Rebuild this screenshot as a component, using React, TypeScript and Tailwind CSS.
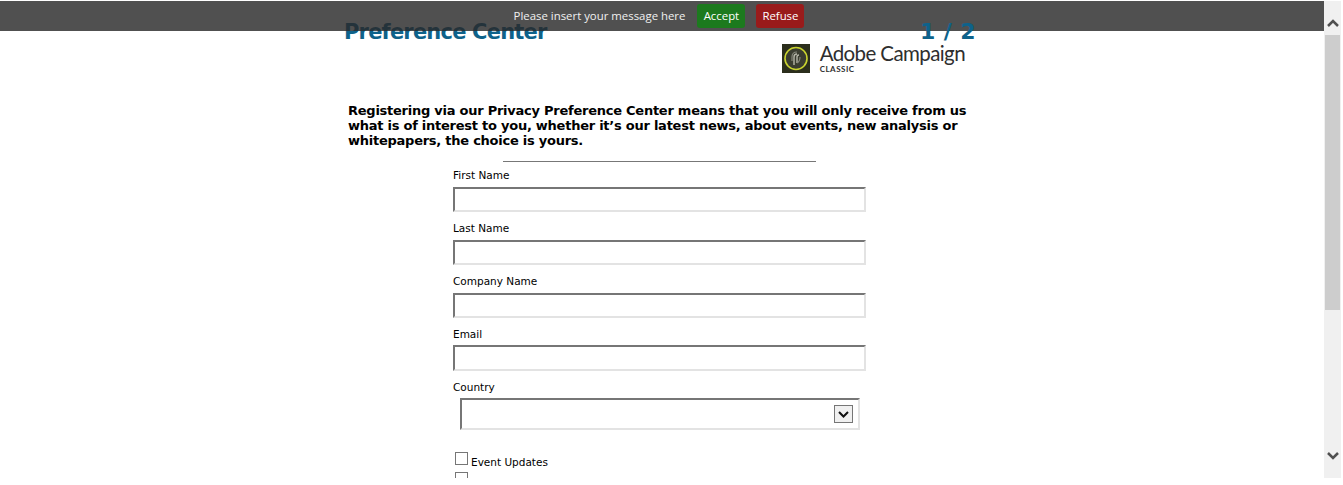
const fields = ["First Name", "Last Name", "Company Name", "Email"];

const insetBorder =
  "border-2 border-t-[#767676] border-l-[#767676] border-r-[#e3e3e3] border-b-[#e3e3e3] bg-white";

const Logo = () => (
  <div className="flex items-start">
    <svg width="28" height="29" viewBox="0 0 28 29" className="mt-[1px]">
      <rect width="28" height="29" fill="#2b2e1c" />
      <circle cx="14" cy="14.500" r="11" fill="#3a3c30" stroke="#c9d32f" strokeWidth="1.6" />
      <path d="M12 21V13c0-2 1-3 3-3M15 19v-6c0-1 .5-2 2-2" fill="none" stroke="#b5b5a8" strokeWidth="1.4" />
      <path d="M10 17v-4c0-3 2-5 5-5M18 13c0 3-1 5-3 6" fill="none" stroke="#85867a" strokeWidth="1.2" />
    </svg>
    <div className="ml-[10px] flex flex-col font-['Lato',sans-serif] text-[#2e2e2e]">
      <span className="-mt-[2px] text-[20.5px] leading-[24px] tracking-[-0.6px]">Adobe Campaign</span>
      <span className="text-[8px] font-bold leading-[8px] tracking-[0.5px]">CLASSIC</span>
    </div>
  </div>
);

export default function App() {
  return (
    <div className="flex h-[485px] w-[1343px] overflow-hidden bg-white pt-px font-['DejaVu_Sans',sans-serif]">
      <div className="relative h-[477px] w-[1324px] overflow-hidden">
        <div className="absolute inset-x-0 top-0 z-10 flex h-[30px] items-center justify-center bg-[#2a2a2a]/[0.82] pb-[1px] font-['Open_Sans',sans-serif] text-[11.4px] text-[#f0f0f0]">
          <span className="ml-[-6px]">Please insert your message here</span>
          <span className="ml-[12px] flex h-[24px] w-[48px] items-center justify-center rounded-[3px] bg-[#1c7a1e] text-white">Accept</span>
          <span className="ml-[11px] flex h-[24px] w-[48px] items-center justify-center rounded-[3px] bg-[#991b1b] text-white">Refuse</span>
        </div>

        <div className="mx-auto w-[636px] pt-[20px]">
          <div className="flex items-baseline justify-between pr-[4px] font-bold leading-[21px] text-[#0e628a]">
            <span className="text-[21px] tracking-[-0.8px]">Preference Center</span>
            <span className="relative z-20 text-[22px] tracking-[0.4px]">1 / 2</span>
          </div>
          <div className="flex justify-end pr-[15px]">
            <Logo />
          </div>
          <p className="pl-[4px] pr-[7px] pt-[30px] text-[13px] font-bold leading-[15px] tracking-[-0.25px] text-black">
            Registering via our Privacy Preference Center means that you will only receive from us what is of interest to you, whether it’s our latest news, about events, new analysis or whitepapers, the choice is yours.
          </p>
          <hr className="ml-[159px] mt-[13px] w-[313px] border-t border-[#777]" />
          <div className="flex flex-col pl-[109px] pt-[7px] text-[10.5px] leading-[13px] text-black">
            {fields.map((f) => (
              <div key={f} className="mb-[10px] flex flex-col">
                <label className={f === "Email" ? "mb-[4px] h-[13px]" : "mb-[5px] h-[13px]"}>{f}</label>
                <input className={`w-[413px] ${f === "Email" ? "h-[26px]" : "h-[25px]"} ${insetBorder}`} />
              </div>
            ))}
            <label className="mb-[4px] h-[13px]">Country</label>
            <div className={`ml-[7px] flex h-[32px] w-[400px] items-center justify-end pr-[5px] ${insetBorder}`}>
              <span className="flex h-[18px] w-[19px] items-center justify-center border border-[#767676] bg-[#f0f0f0]">
                <svg width="11" height="7" viewBox="0 0 11 7">
                  <path d="M1 1l4.500 4.500L10 1" fill="none" stroke="#111" strokeWidth="2" />
                </svg>
              </span>
            </div>
            <div className="ml-[2px] mt-[22px] flex flex-col">
              <label className="flex h-[20px] items-start">
                <span className="block h-[13px] w-[13px] border border-[#767676] bg-white" />
                <span className="ml-[3px] mt-[4px]">Event Updates</span>
              </label>
              <label className="flex h-[20px] items-start">
                <span className="block h-[13px] w-[13px] border border-[#767676] bg-white" />
                <span className="ml-[3px] mt-[4px]">Leadership Insights</span>
              </label>
            </div>
          </div>
        </div>
      </div>

      <div className="flex h-[477px] w-[17px] flex-col items-center bg-[#f0f0f0]">
        <div className="flex h-[34px] w-full items-center justify-center pt-[10px]">
          <svg width="12" height="8" viewBox="0 0 12 8">
            <path d="M1 7l5-5 5 5" fill="none" stroke="#505050" strokeWidth="2.500" />
          </svg>
        </div>
        <div className="h-[275px] w-[15px] bg-[#cdcdcd]" />
        <div className="flex-1" />
        <div className="flex h-[34px] w-full items-center justify-center pb-[10px]">
          <svg width="12" height="8" viewBox="0 0 12 8">
            <path d="M1 1l5 5 5-5" fill="none" stroke="#505050" strokeWidth="2.500" />
          </svg>
        </div>
      </div>
    </div>
  );
}
